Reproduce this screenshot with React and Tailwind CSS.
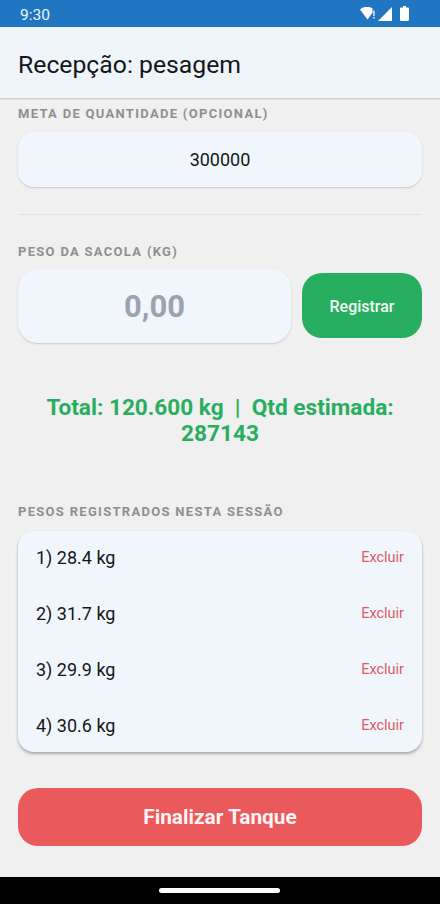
import React from "react";

const pesos = ["1) 28.4 kg", "2) 31.7 kg", "3) 29.9 kg", "4) 30.6 kg"];

function SectionLabel({ children }) {
  return (
    <div className="text-[13px] leading-[16px] font-bold tracking-[1.3px] text-[#8f8f8f]">
      {children}
    </div>
  );
}

function StatusBar() {
  return (
    <div className="h-[27px] shrink-0 bg-[#2176c1] flex items-center justify-between pl-[20px] pr-[31px] text-white">
      <span className="mt-[2px] text-[15.500px] leading-[24px] text-[#eef4fa]">9:30</span>
      <div className="flex items-center">
        <svg width="16" height="13" viewBox="0 0 16 13" fill="#fff">
          <path d="M0 2.500C4 -.8 8.500 -.8 12.500 1.200V5.800L7.500 12.500Z" />
          <rect x="13.300" y="3.500" width="1.300" height="5.500" />
          <rect x="13.300" y="10" width="1.300" height="1.500" />
        </svg>
        <svg width="14" height="14" viewBox="0 0 14 14" className="ml-[2px]">
          <path d="M14 0v14H0L14 0z" fill="#fff" />
        </svg>
        <svg width="9" height="15" viewBox="0 0 9 15" className="ml-[8px]">
          <path d="M3 0h3v1.400h1.800c.7 0 1.200.5 1.200 1.200v11.200c0 .7-.5 1.200-1.200 1.200H1.200C.5 15 0 14.500 0 13.800V2.600c0-.7.5-1.200 1.200-1.200H3V0z" fill="#fff" />
        </svg>
      </div>
    </div>
  );
}

export default function App() {
  return (
    <div className="w-[440px] h-[904px] flex flex-col overflow-hidden bg-[#f0f0f0] font-['Roboto',sans-serif]">
      <StatusBar />

      {/* Header */}
      <div className="h-[71px] shrink-0 bg-[#eff4f9] flex items-center px-[18px] pt-[4px] shadow-[0_1px_2px_rgba(0,0,0,0.2)] z-10">
        <h1 className="text-[24.750px] leading-[32px] text-[#14171a]">Recepção: pesagem</h1>
      </div>

      {/* Scrollable content */}
      <div className="flex-1 px-[18px] pt-[8px] flex flex-col">
        <SectionLabel>META DE QUANTIDADE (OPCIONAL)</SectionLabel>
        <div className="mt-[10px] h-[55px] rounded-[16px] bg-[#f1f6fc] flex items-center justify-center text-[18px] text-[#14171a] shadow-[0_1px_2px_rgba(0,0,0,0.16)]">
          300000
        </div>

        <div className="mt-[27px] h-px bg-[#dfe1e3]" />

        <div className="mt-[29px]">
          <SectionLabel>PESO DA SACOLA (KG)</SectionLabel>
        </div>
        <div className="mt-[9px] flex items-start gap-[11px]">
          <div className="w-[273px] h-[74px] pt-[3px] rounded-[20px] bg-[#f1f6fc] flex items-center justify-center text-[31px] font-bold text-[#9ca3af] shadow-[0_1px_2px_rgba(0,0,0,0.16)]">
            0,00
          </div>
          <button className="mt-[4px] w-[120px] h-[65px] pt-[2px] rounded-[20px] bg-[#28ae60] text-[#f2f8f4] text-[16px] font-medium">
            Registrar
          </button>
        </div>

        <div className="mt-[52px] text-center text-[22.600px] leading-[26px] font-bold text-[#28ae60]">
          Total: 120.600 kg&nbsp; |&nbsp; Qtd estimada: 287143
        </div>

        <div className="mt-[57px]">
          <SectionLabel>PESOS REGISTRADOS NESTA SESSÃO</SectionLabel>
        </div>
        <div className="mt-[11px] h-[221px] rounded-[16px] bg-[#f1f6fc] shadow-[0_2px_3px_rgba(0,0,0,0.3)] flex flex-col gap-[4px]">
          {pesos.map((peso) => (
            <div key={peso} className="h-[52px] shrink-0 px-[18px] flex items-center justify-between">
              <span className="text-[18px] text-[#14171a]">{peso}</span>
              <span className="mt-[2px] text-[14.500px] text-[#dc5a64]">Excluir</span>
            </div>
          ))}
        </div>

        <button className="mt-[36px] h-[58px] pt-[2px] shrink-0 rounded-[20px] bg-[#ea595b] text-[#fdf3f3] text-[20.800px] font-bold">
          Finalizar Tanque
        </button>
      </div>

      {/* Navigation bar */}
      <div className="h-[27px] shrink-0 bg-black flex items-center justify-center">
        <div className="mr-[1px] w-[121px] h-[5px] rounded-full bg-white" />
      </div>
    </div>
  );
}
